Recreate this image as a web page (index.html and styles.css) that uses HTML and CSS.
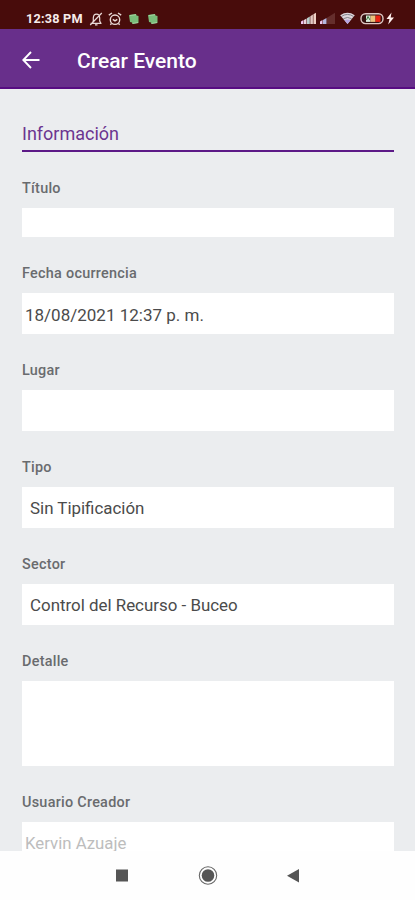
FILE: index.html
```html
<!DOCTYPE html>
<html lang="es">
<head>
<meta charset="utf-8">
<meta name="viewport" content="width=device-width, initial-scale=1">
<title>Crear Evento</title>
<link rel="stylesheet" href="styles.css">
</head>
<body>
<div class="screen">
  <div class="status">
    <span class="clock">12:38 PM</span>
    <svg class="i-mute" width="14" height="14" viewBox="0 0 14 14" fill="none" stroke="#eadbd8" stroke-width="1.2"><path d="M1.500 11.300h11M3.300 11l1-2V6q.2-3.800 3.200-3.800T10.700 6v3l1 2M6 12.900h2.500M12.800 1 1.200 13"/></svg>
    <svg class="i-alarm" width="14" height="14" viewBox="0 0 14 14" fill="none" stroke="#eadbd8" stroke-width="1.400"><circle cx="7" cy="7.700" r="4.700"/><path d="M.8 3.200 4 1M13.200 3.200 10 1M4.800 7.300 7 8.800l2.300-1.500M3.500 11.500l-1.200 1.300M10.500 11.500l1.200 1.300"/></svg>
    <svg class="i-note" width="12" height="12" viewBox="0 0 12 12"><path fill="#79bd7a" d="M1 2 8 1l.5 1.500 2 .5v7L4.500 11 4 9.500l-2-.5z"/><path fill="none" stroke="#b5dfb0" stroke-width=".7" d="M2 2.500l6-.8M4.500 10.500l5.500-1"/></svg>
    <svg class="i-note second" width="12" height="12" viewBox="0 0 12 12"><path fill="#79bd7a" d="M1 2 8 1l.5 1.500 2 .5v7L4.500 11 4 9.500l-2-.5z"/><path fill="none" stroke="#b5dfb0" stroke-width=".7" d="M2 2.500l6-.8M4.500 10.500l5.500-1"/></svg>
    <svg class="i-system" width="96" height="14" viewBox="0 0 96 14">
      <path d="M1 9.500l2.500-1.400V12H1z" fill="#f1c7ef"/><path d="M4 8l2.500-1.500V12H4z" fill="#e9d5dd"/><path d="M7 6.200l2.800-1.700V12H7z" fill="#b9cfcc"/><path d="M10.300 4.200l2.600-1.600V12h-2.600z" fill="#e2c8c2"/><path d="M13.400 2.300 16 .8V12h-2.600z" fill="#eed0c5"/>
      <path d="M20 9.500l2.500-1.400V12H20z" fill="#efc8f0"/><path d="M23 8l3.500-2V12H23z" fill="#b4b7dd"/><path d="M27 5.700 35 .8V12h-8z" fill="#652e2c"/>
      <path d="M40.200 3.200q7.300-4.900 14.600 0L47.500 12z" fill="#dfd7dc"/><path d="M41.500 4.400q6-3.900 12 0M43.400 6.700q4.100-2.500 8.200 0" fill="none" stroke="#76777f" stroke-width=".9"/><path d="M44.500 8.300q3-1.800 6 0L47.500 12z" fill="#b7a5e0"/>
      <rect x="61" y="1.800" width="22" height="9.800" rx="4.500" fill="#351211" stroke="#dfc7c3" stroke-width="1.400"/><path d="M66 3.500h4.500v6.400H66z" fill="#d9eadb"/><path d="M66.500 8 68 4.500 70 8" fill="none" stroke="#38773c"/><path d="M70.500 3.500h5v6.400h-5z" fill="#edc27c"/><path d="M75.500 3.500h5v6.400h-5z" fill="#eb2413"/>
      <path d="M91.500.5 86.500 7h3l-1.300 5.500L94 5.500h-3.300z" fill="#fff1ef"/>
    </svg>
  </div>
  <header class="appbar">
    <svg class="back" width="18" height="18" viewBox="0 0 18 18" fill="none" stroke="#fff" stroke-width="1.900"><path d="M17.500 9H1.500M9 1 1.300 9 9 17"/></svg>
    <h1>Crear Evento</h1>
  </header>
  <main class="form">
    <h2>Información</h2>
    <label>Título</label>
    <div class="box short"></div>
    <label>Fecha ocurrencia</label>
    <div class="box">18/08/2021 12:37 p. m.</div>
    <label>Lugar</label>
    <div class="box"></div>
    <label>Tipo</label>
    <div class="box select">Sin Tipificación</div>
    <label>Sector</label>
    <div class="box select">Control del Recurso - Buceo</div>
    <label>Detalle</label>
    <div class="box tall"></div>
    <label>Usuario Creador</label>
    <div class="box disabled">Kervin Azuaje</div>
  </main>
  <nav class="navbar">
    <svg width="415" height="49" viewBox="0 0 415 49" fill="#555"><path d="M116 18.500h12v12h-12z"/><circle cx="208" cy="24.500" r="6.300"/><circle cx="208" cy="24.500" r="8.700" fill="none" stroke="#666" stroke-width="1.100"/><path d="M299 18v13.500L287 24.700z"/></svg>
  </nav>
</div>
</body>
</html>
```
FILE: styles.css
```css
* { box-sizing: border-box; }
body { margin: 0; background: #fff; font-family: Roboto, "Liberation Sans", sans-serif; }
.screen { width: 415px; height: 900px; display: flex; flex-direction: column; overflow: hidden; background: #ebedef; }
.status { height: 29px; flex: none; background: #480c0b; display: flex; align-items: center; padding: 9px 0 0 26px; color: #f7eceb; }
.clock { width: 58px; font-size: 12.7px; font-weight: 700; line-height: 14px; white-space: nowrap; letter-spacing: .2px; }
.i-mute { margin-left: 5px; }
.i-alarm { margin-left: 5px; }
.i-note { margin-left: 6px; }
.i-note.second { margin-left: 7px; }
.i-system { margin-left: auto; margin-right: 19px; }
.appbar { height: 60px; flex: none; background: #682f8b; border-bottom: 2px solid #570c82; display: flex; align-items: center; padding: 3px 0 0 22px; color: #fff; }
.appbar h1 { margin: 0 0 0 37px; padding-top: 2px; font-size: 21px; font-weight: 500; line-height: 28px; white-space: nowrap; }
.form { flex: 1; min-height: 0; overflow: hidden; padding: 0 21px 0 22px; }
h2 { margin: 0; height: 63px; padding-top: 33px; border-bottom: 2px solid #5c1a87; color: #6b3590; font-size: 18px; font-weight: 400; line-height: 24px; }
label { display: block; height: 56px; padding-top: 27px; font-size: 14.4px; line-height: 20px; font-weight: 500; color: #696b6e; letter-spacing: .27px; }
.box { height: 41px; background: #fff; display: flex; align-items: center; padding: 2px 3px 0; font-size: 17px; line-height: 22px; color: #4b4b4b; white-space: nowrap; }
.box.short { height: 29px; }
.box.tall { height: 85px; }
.box.select { padding: 1px 8px 0; font-size: 16.9px; }
.box.disabled { padding-top: 1px; color: #bdbdbd; font-size: 16.800px; }
.navbar { height: 49px; flex: none; background: #fefefe; }
.navbar svg { display: block; }
```
